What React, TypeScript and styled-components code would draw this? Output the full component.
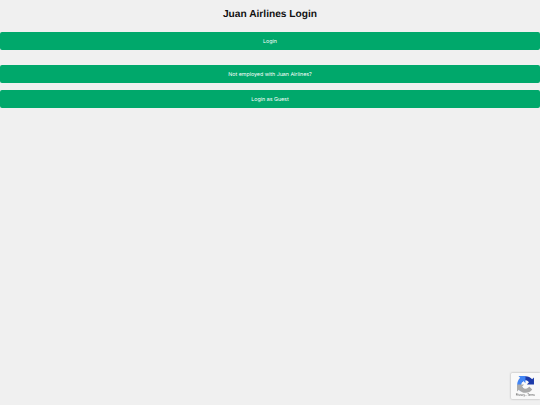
import * as React from 'react';
import styled, { createGlobalStyle } from 'styled-components';

const GlobalStyle = createGlobalStyle`
  html, body {
    margin: 0;
    padding: 0;
    background: #f0f0f0;
    height: 100%;
    overflow: hidden;
  }
`;

const Page = styled.div`
  display: flex;
  flex-direction: column;
  font-family: "Liberation Sans", Arial, sans-serif;
`;

const Title = styled.h1`
  margin: 0;
  padding-top: 9px;
  height: 32px;
  box-sizing: border-box;
  text-align: center;
  font-size: 10.2px;
  line-height: 12px;
  font-weight: bold;
  color: #111;
  text-rendering: geometricPrecision;
`;

const Actions = styled.div`
  display: flex;
  flex-direction: column;
  gap: 7px;
`;

const LoginForm = styled.form`
  margin: 0 0 15px;
`;

const Button = styled.button`
  display: block;
  width: 100%;
  height: 18px;
  padding: 2px 0 0;
  border: none;
  border-radius: 2px;
  background: #00a86b;
  color: #fff;
  font-family: Inter, "Liberation Sans", sans-serif;
  font-size: 5.3px;
  text-rendering: geometricPrecision;
  cursor: pointer;
`;

const Badge = styled.div`
  position: fixed;
  right: 0;
  bottom: 6px;
  width: 29.5px;
  height: 26.5px;
  background: #f9f9f9;
  border-radius: 1px 0 0 1px;
  box-shadow: 0 0 2px rgba(128, 128, 128, 0.8);
  display: flex;
  flex-direction: column;
  align-items: center;
  padding-top: 3px;
  box-sizing: border-box;
`;

const BadgeLinks = styled.div`
  font-family: "Liberation Sans", Arial, sans-serif;
  font-size: 2.8px;
  line-height: 4px;
  color: #555;
  white-space: nowrap;
`;

const RecaptchaIcon = () => (
  <svg width="17" height="17" viewBox="0 0 64 64">
    <path d="M64 32l-.1-1.4V5.5l-7 7A32 32 0 0 0 6.7 13.2l11.4 11.6a16 16 0 0 1 4.5-5.2A16 16 0 0 1 32 16c.9 0 1.6.1 2.2.3a16 16 0 0 1 10.9 7.6l-8 8c10.200 0 21.700 0 26.900.1z" fill="#1c3aa9" />
    <path d="M32 0l-1.400.1H5.500l7 7A32 32 0 0 0 13.200 57.300l11.600-11.400a16 16 0 0 1-5.200-4.500A16 16 0 0 1 16 32c0-.9.100-1.600.3-2.200a16 16 0 0 1 7.600-10.900l8 8c0-10.200 0-21.700.1-26.900z" fill="#4285f4" />
    <path d="M0 32l.1 1.400v25.100l7-7a32 32 0 0 0 50.200-.7L45.900 39.200a16 16 0 0 1-4.500 5.200A16 16 0 0 1 32 48c-.9 0-1.600-.1-2.200-.3a16 16 0 0 1-10.900-7.600l8-8c-10.200 0-21.700 0-26.900-.1z" fill="#ababab" />
  </svg>
);

export default function App() {
  return (
    <Page>
      <GlobalStyle />
      <Title>Juan Airlines Login</Title>
      <LoginForm onSubmit={(e) => e.preventDefault()}>
        <Button type="submit">Login</Button>
      </LoginForm>
      <Actions>
        <Button type="button">Not employed with Juan Airlines?</Button>
        <Button type="button">Login as Guest</Button>
      </Actions>
      <Badge>
        <RecaptchaIcon />
        <BadgeLinks>Privacy - Terms</BadgeLinks>
      </Badge>
    </Page>
  );
}
